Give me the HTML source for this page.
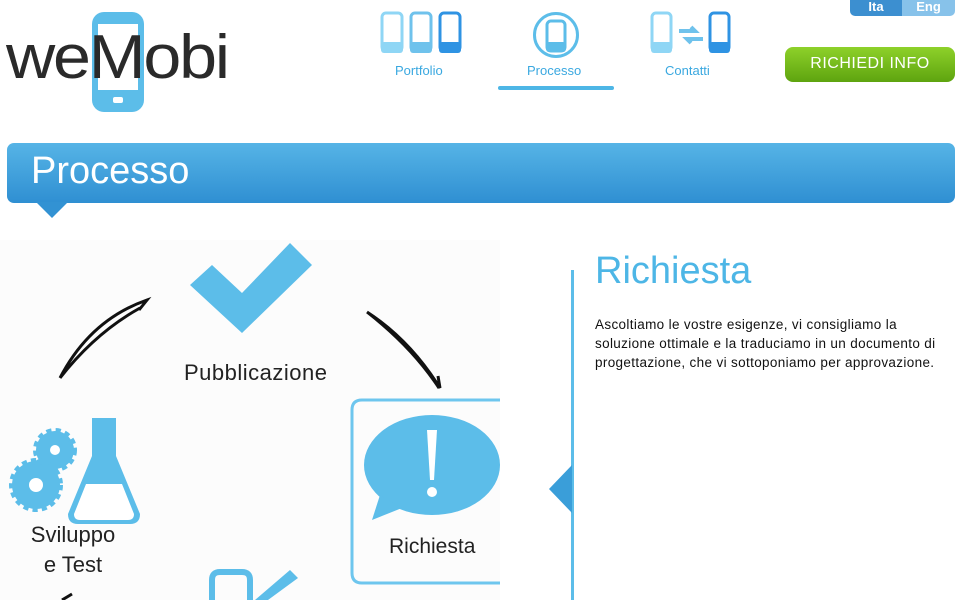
<!DOCTYPE html>
<html><head><meta charset="utf-8"><style>
*{margin:0;padding:0;box-sizing:border-box}
body{width:956px;height:600px;overflow:hidden;background:#fff;font-family:"Liberation Sans",sans-serif;position:relative}
.a{position:absolute}
.nav{color:#3aa8e0;font-size:13px}
</style></head><body>

<!-- logo -->
<div class="a" style="left:92px;top:12px;width:52px;height:100px;border-radius:12px;background:#5cbde9"></div>
<div class="a" style="left:98px;top:24px;width:40px;height:66px;background:#fff"></div>
<div class="a" style="left:113px;top:97px;width:10px;height:6px;border-radius:2px;background:#fff"></div>
<div class="a" style="left:6px;top:22px;font-size:62px;letter-spacing:-2px;color:#2a2a2a;transform:scaleX(1.1);transform-origin:0 0">weMobi</div>

<!-- nav icons -->
<svg class="a" style="left:380px;top:11px" width="82" height="44">
<g fill="none" stroke-width="3">
<rect x="2" y="2" width="20" height="38" rx="4" stroke="#8fd6f5"/>
<rect x="31" y="2" width="20" height="38" rx="4" stroke="#6fc2ec"/>
<rect x="60" y="2" width="20" height="38" rx="4" stroke="#2f93e3"/></g>
<rect x="1" y="31" width="22" height="11" rx="3" fill="#8fd6f5"/>
<rect x="30" y="31" width="22" height="11" rx="3" fill="#6fc2ec"/>
<rect x="59" y="31" width="22" height="11" rx="3" fill="#2f93e3"/>
</svg>
<div class="a nav" style="left:395px;top:63px">Portfolio</div>

<svg class="a" style="left:532px;top:11px" width="48" height="48">
<circle cx="24" cy="24" r="21.5" fill="none" stroke="#5cbde9" stroke-width="3"/>
<rect x="15" y="10" width="18" height="30" rx="4" fill="none" stroke="#5cbde9" stroke-width="3"/>
<rect x="14" y="31" width="20" height="10" rx="3" fill="#5cbde9"/>
</svg>
<div class="a nav" style="left:527px;top:63px">Processo</div>
<div class="a" style="left:498px;top:86px;width:116px;height:4px;border-radius:2px;background:#4db6e6"></div>

<svg class="a" style="left:650px;top:11px" width="82" height="44">
<g fill="none" stroke-width="3">
<rect x="2" y="2" width="19" height="38" rx="4" stroke="#8fd6f5"/>
<rect x="60" y="2" width="19" height="38" rx="4" stroke="#2f93e3"/></g>
<rect x="1" y="31" width="21" height="11" rx="3" fill="#8fd6f5"/>
<rect x="59" y="31" width="21" height="11" rx="3" fill="#2f93e3"/>
<path d="M29 20h16l-4-4M53 28H37l4 4" stroke="#6fc2ec" stroke-width="4" fill="none"/>
</svg>
<div class="a nav" style="left:665px;top:63px">Contatti</div>

<!-- lang -->
<div class="a" style="left:850px;top:0;width:52px;height:16px;background:#3c8fd0;border-radius:0 0 0 5px;color:#fff;font-size:13px;font-weight:bold;text-align:center;line-height:14px">Ita</div>
<div class="a" style="left:902px;top:0;width:53px;height:16px;background:#87c2ea;border-radius:0 0 5px 0;color:#fff;font-size:13px;font-weight:bold;text-align:center;line-height:14px">Eng</div>

<!-- button -->
<div class="a" style="left:785px;top:47px;width:170px;height:35px;border-radius:8px;background:linear-gradient(#8ed12a,#5ea40f);color:#fff;font-size:16px;text-align:center;line-height:33px;letter-spacing:.5px">RICHIEDI INFO</div>

<!-- banner -->
<div class="a" style="left:7px;top:143px;width:948px;height:60px;border-radius:7px;background:linear-gradient(#56b4e6,#2f8fd2)"></div>
<div class="a" style="left:36px;top:202px;width:0;height:0;border-left:16px solid transparent;border-right:16px solid transparent;border-top:16px solid #3292d3"></div>
<div class="a" style="left:31px;top:150px;font-size:38px;color:#fff">Processo</div>

<!-- diagram -->
<div class="a" style="left:0;top:240px;width:500px;height:360px;background:#fcfcfc"></div>
<svg class="a" style="left:0;top:240px" width="500" height="360">
<path d="M190 45l22 -20 30 28 48 -50 22 22 -70 68z" fill="#5cbde9"/>
<path d="M60 138Q90 80 147 60l-8 10M60 138q35-45 80-70" stroke="#111" stroke-width="3" fill="none"/>
<path d="M367 72Q410 100 440 148l-2-12M367 72q45 35 72 76" stroke="#111" stroke-width="3" fill="none"/>
<circle cx="55" cy="210" r="19" fill="#5cbde9" stroke="#5cbde9" stroke-width="6" stroke-dasharray="5 4"/>
<circle cx="55" cy="210" r="5" fill="#fff"/>
<circle cx="36" cy="245" r="24" fill="#5cbde9" stroke="#5cbde9" stroke-width="6" stroke-dasharray="5 4"/>
<circle cx="36" cy="245" r="7" fill="#fff"/>
<path d="M92 178h24v38l24 58q0 10-10 10H78q-10 0-10-10l24-58z" fill="#5cbde9"/>
<path d="M86 244h36l12 30q0 6-6 6H80q-6 0-6-6z" fill="#fff"/>
<path d="M500 160H362q-10 0-10 10v163q0 10 10 10h138" fill="none" stroke="#6ec6ee" stroke-width="3"/>
<ellipse cx="432" cy="225" rx="68" ry="50" fill="#5cbde9"/>
<path d="M380 255l-8 25 30-12z" fill="#5cbde9"/>
<path d="M427 190h10l-3 50h-4z" fill="#fff"/><circle cx="432" cy="252" r="5" fill="#fff"/>
<path d="M212 360v-20q0-8 8-8h22q8 0 8 8v20" fill="none" stroke="#5cbde9" stroke-width="6"/>
<path d="M255 360l35-30 8 8-30 22z" fill="#5cbde9"/>
<path d="M62 360l10-6" stroke="#111" stroke-width="3"/>
</svg>
<div class="a" style="left:184px;top:360px;font-size:22px;color:#222;letter-spacing:.5px">Pubblicazione</div>
<div class="a" style="left:30px;top:520px;font-size:22px;color:#222;text-align:center;line-height:30px;width:86px">Sviluppo<br>e Test</div>
<div class="a" style="left:389px;top:535px;font-size:21px;color:#222">Richiesta</div>

<!-- right panel -->
<div class="a" style="left:571px;top:270px;width:3px;height:330px;background:#5cbde9"></div>
<div class="a" style="left:549px;top:465px;width:0;height:0;border-top:24px solid transparent;border-bottom:24px solid transparent;border-right:23px solid #3a9ed9"></div>
<div class="a" style="left:595px;top:250px;font-size:38px;color:#4db6e6">Richiesta</div>
<div class="a" style="left:595px;top:315px;font-size:13.5px;letter-spacing:.35px;line-height:19px;color:#111;white-space:nowrap">Ascoltiamo le vostre esigenze, vi consigliamo la<br>soluzione ottimale e la traduciamo in un documento di<br>progettazione, che vi sottoponiamo per approvazione.</div>
</body></html>
